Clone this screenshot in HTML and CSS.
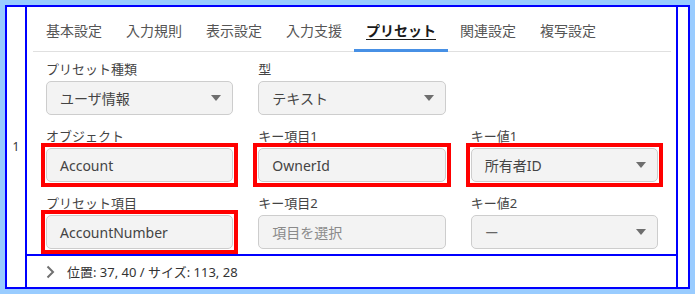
FILE: index.html
```html
<!DOCTYPE html>
<html lang="ja">
<head>
<meta charset="utf-8">
<title>プリセット</title>
<link rel="stylesheet" href="styles.css">
</head>
<body>
<div class="frame">
  <div class="rownum">1</div>
  <div class="main">
    <div class="panel">
      <div class="tabs">
        <span class="tab">基本設定</span>
        <span class="tab">入力規則</span>
        <span class="tab">表示設定</span>
        <span class="tab">入力支援</span>
        <span class="tab active">プリセット</span>
        <span class="tab">関連設定</span>
        <span class="tab">複写設定</span>
      </div>
      <div class="form">
        <div class="field">
          <div class="label">プリセット種類</div>
          <div class="box select"><span>ユーザ情報</span><svg class="caret" width="10" height="6" viewBox="0 0 10 6"><path d="M0 0H10L5 6Z"/></svg></div>
        </div>
        <div class="field">
          <div class="label">型</div>
          <div class="box select"><span>テキスト</span><svg class="caret" width="10" height="6" viewBox="0 0 10 6"><path d="M0 0H10L5 6Z"/></svg></div>
        </div>
        <div class="field"></div>

        <div class="field">
          <div class="label">オブジェクト</div>
          <div class="hl"><div class="box"><span>Account</span></div></div>
        </div>
        <div class="field">
          <div class="label">キー項目1</div>
          <div class="hl"><div class="box"><span>OwnerId</span></div></div>
        </div>
        <div class="field">
          <div class="label">キー値1</div>
          <div class="hl"><div class="box select"><span>所有者ID</span><svg class="caret" width="10" height="6" viewBox="0 0 10 6"><path d="M0 0H10L5 6Z"/></svg></div></div>
        </div>

        <div class="field">
          <div class="label">プリセット項目</div>
          <div class="hl"><div class="box"><span>AccountNumber</span></div></div>
        </div>
        <div class="field">
          <div class="label">キー項目2</div>
          <div class="box"><span class="placeholder">項目を選択</span></div>
        </div>
        <div class="field">
          <div class="label">キー値2</div>
          <div class="box select"><span class="dash">ー</span><svg class="caret" width="10" height="6" viewBox="0 0 10 6"><path d="M0 0H10L5 6Z"/></svg></div>
        </div>
      </div>
    </div>
    <div class="footer">
      <svg class="chev" width="9" height="14" viewBox="0 0 9 14"><path d="M1.5 1.5L7 7L1.5 12.5" fill="none" stroke="#707070" stroke-width="2"/></svg>
      <span>位置: 37, 40 / サイズ: 113, 28</span>
    </div>
  </div>
  <div class="rpad"></div>
</div>
</body>
</html>
```

FILE: styles.css
```css
html, body {
  margin: 0;
  padding: 0;
  background: #99ccff;
}

body {
  font-family: "Noto Sans", "Noto Sans CJK JP", sans-serif;
  color: #444;
}

.frame {
  margin: 5px;
  width: 685px;
  height: 284px;
  box-sizing: border-box;
  border: 2px solid #0000ff;
  background: #fff;
  display: grid;
  grid-template-columns: 18px 653px 10px;
}

.rownum {
  display: flex;
  align-items: center;
  justify-content: center;
  font-size: 12px;
  line-height: 14px;
  color: #333;
}

.main {
  border-left: 2px solid #0000ff;
  border-right: 2px solid #0000ff;
  display: flex;
  flex-direction: column;
}

.panel {
  height: 247px;
  border-bottom: 2px solid #0000ff;
  padding: 0 5px 0 6px;
}

.tabs {
  display: flex;
  height: 44px;
  padding-left: 1px;
  border-bottom: 1px solid #e0e0e0;
}

.tab {
  position: relative;
  padding: 4px 12px 0;
  height: 40px;
  line-height: 40px;
  font-size: 14px;
  color: #555;
  white-space: nowrap;
}

.tab.active {
  color: #1a1a1a;
  font-weight: bold;
  text-decoration: underline;
  text-underline-offset: 3px;
}

.tab.active::after {
  content: "";
  position: absolute;
  left: 0;
  right: 0;
  bottom: -1px;
  height: 3px;
  background: #4790e5;
}

.form {
  display: grid;
  grid-template-columns: 1fr 1fr 1fr;
  column-gap: 25px;
  row-gap: 12px;
  padding: 8px 13px 5px;
}

.field .label {
  font-size: 13px;
  line-height: 18px;
  margin-bottom: 3px;
  color: #444;
  white-space: nowrap;
}

.box {
  height: 34px;
  box-sizing: border-box;
  border: 1px solid #cdcdcd;
  border-radius: 5px;
  background: #f3f3f3;
  display: flex;
  align-items: center;
  padding: 0 11px 0 13px;
  font-size: 14px;
  color: #444;
}

.box span {
  flex: 1;
  white-space: nowrap;
}

.box .placeholder {
  color: #8a8a8a;
}

.box .dash {
  color: #666;
}

.caret path {
  fill: #6e6e6e;
}

.hl {
  margin: -5px;
  border: 4px solid #ff0000;
  padding: 1px;
  background: #fff;
}

.footer {
  height: 31px;
  display: flex;
  align-items: center;
  padding-left: 19px;
  font-size: 13px;
  color: #333;
}

.chev {
  margin-right: 12px;
}
```
